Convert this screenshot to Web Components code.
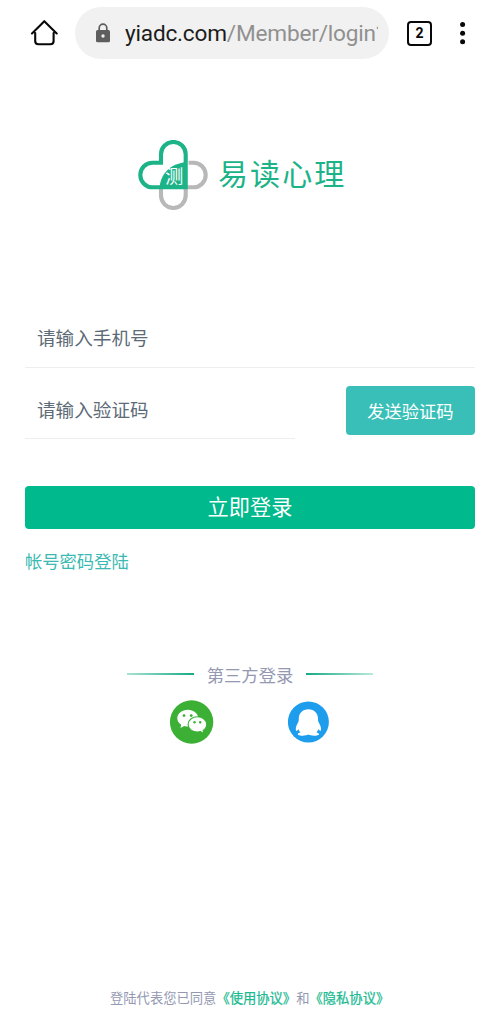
<!DOCTYPE html>
<html lang="zh-CN">
<head>
<meta charset="utf-8">
<title>易读心理</title>
<style>
body{margin:0;background:#fff;font-family:"Noto Sans CJK SC","Noto Sans",sans-serif}
</style>
</head>
<body>
<login-page></login-page>
<script>
const define=(name,html)=>customElements.define(name,class extends HTMLElement{
  constructor(){
    super();
    const t=document.createElement('template');
    t.innerHTML=html;
    this.attachShadow({mode:'open'}).append(t.content.cloneNode(true));
  }
});

define('browser-bar',`<style>
:host{display:flex;align-items:center;height:66px;box-sizing:border-box;padding-left:30px;font-family:Roboto,sans-serif}
svg{display:block;flex:none}
.url{display:flex;align-items:center;width:314px;height:52px;margin-left:17px;border-radius:26px;background:#f1f1f1;box-sizing:border-box;padding-left:20px}
.addr{margin-left:14px;width:253px;overflow:hidden;white-space:nowrap;font-size:22.6px;line-height:32px;color:#909090;letter-spacing:-.19px;padding-top:1px}
.addr b{font-weight:400;color:#1c1c1c}
.tabs{width:25px;height:25px;box-sizing:border-box;border:2.6px solid #080808;border-radius:4px;margin-left:18px;display:flex;align-items:center;justify-content:center;font-size:14px;font-weight:700;color:#080808}
.menu{margin-left:27px}
</style>
<svg width="28" height="28" viewBox="0 0 28 28" fill="none" stroke="#080808" stroke-width="2.1" stroke-linecap="round" stroke-linejoin="round"><path d="M2 14.4 14.3 2.2 26.7 14.4M5.2 14V22q0 3.3 3.3 3.3H20.3q3.3 0 3.3-3.3V14"/></svg>
<div class="url">
<svg width="16" height="20" viewBox="0 0 16 20"><rect x="1" y="7" width="14" height="12.3" rx="1.6" fill="#5e5e5e"/><path d="M4.2 8V5a3.8 3.8 0 0 1 7.6 0v3" fill="none" stroke="#5e5e5e" stroke-width="1.7"/><circle cx="8" cy="13" r="1.7" fill="#f1f1f1"/></svg>
<div class="addr"><b>yiadc.com</b>/Member/login?</div>
</div>
<div class="tabs">2</div>
<svg class="menu" width="8" height="24" viewBox="0 0 8 24" fill="#080808"><circle cx="3.6" cy="3.6" r="2.5"/><circle cx="3.6" cy="12.2" r="2.5"/><circle cx="3.6" cy="20.8" r="2.5"/></svg>`);

define('brand-logo',`<style>
:host{display:flex;align-items:center;margin:74px 0 0 138px;height:70px}
svg{display:block;flex:none}
span{margin-left:10px;margin-top:-7px;font-size:30px;line-height:40px;letter-spacing:2.1px;color:#1bb387;white-space:nowrap}
</style>
<svg width="70" height="70" viewBox="0 0 70 70">
<g fill="none" stroke-width="4.1">
<path stroke="#b8b8b8" d="M50.5 22.7H55.4A12.3 12.3 0 0 1 55.4 47.3H49M47.7 49V55.6A12.35 12.35 0 0 1 23 55.6V49"/>
<path stroke="#1bb387" d="M47.7 47.3V14.3A12.35 12.35 0 0 0 23 14.3V22.7H14.6A12.3 12.3 0 0 0 14.6 47.3Z"/>
</g>
<path fill="#1bb387" d="M21.5 48C22.5 34 32 23.5 48 22.2V48Z"/>
<text x="27.3" y="43.2" font-size="18" fill="#fff" font-family="Noto Sans CJK SC,sans-serif">测</text>
</svg>
<span>易读心理</span>`);

define('text-field',`<style>
:host{display:block;box-sizing:border-box;border-bottom:1px solid #eee;padding-left:12px;font-size:18.6px;line-height:28px;color:#5c6b77;white-space:nowrap}
</style><slot></slot>`);

define('action-button',`<style>
:host{display:flex;align-items:center;justify-content:center;box-sizing:border-box;border-radius:4px;color:#fff;white-space:nowrap}
</style><slot></slot>`);

define('login-form',`<style>
:host{display:block;padding:0 25px}
.phone{height:45px}
.row{display:flex;justify-content:space-between;margin-top:18px;height:54px}
.code{width:270px;height:53px;padding-top:9px}
.send{width:129px;height:49px;margin-top:0;background:#3abfb8;font-size:17.25px;line-height:26px;padding-top:1px}
.go{height:43px;margin-top:46px;background:#00b98c;font-size:21.2px;line-height:30px;padding-bottom:3px}
.alt{margin-top:19px;font-size:17.3px;line-height:26px;color:#3abab3}
</style>
<text-field class="phone">请输入手机号</text-field>
<div class="row"><text-field class="code">请输入验证码</text-field><action-button class="send">发送验证码</action-button></div>
<action-button class="go">立即登录</action-button>
<div class="alt">帐号密码登陆</div>`);

define('third-party',`<style>
:host{display:block}
.head{display:flex;justify-content:center;gap:13px;font-size:17.3px;line-height:26px;color:#9498b1}
i{width:67px;height:2px;margin-top:11px;background:linear-gradient(90deg,#a8e3d3,#16a985)}
i:last-child{background:linear-gradient(270deg,#b7eadc,#16a985)}
.icons{display:flex;align-items:center;margin:12px 0 0 169px;gap:74px}
svg{display:block}
</style>
<div class="head"><i></i><span>第三方登录</span><i></i></div>
<div class="icons">
<svg width="45" height="44" viewBox="0 0 45 44"><circle cx="22.6" cy="22" r="21.7" fill="#3bb034"/>
<path fill="#fff" d="M18.8 9.7C13 9.7 8.3 13.4 8.3 18.2c0 2.8 1.5 5 4 6.5L11.4 28l3.9-2c1.2.4 2.3.5 3.5.5 5.8 0 10.4-3.6 10.4-8.4S24.6 9.7 18.8 9.7Z"/>
<path fill="#fff" stroke="#3bb034" stroke-width="1.1" d="M28.4 16.8c-5.2 0-9.3 3.3-9.3 7.6s4.1 7.6 9.3 7.6c1.1 0 2.1-.1 3-.4l3.6 2-.9-3.1c2.2-1.5 3.6-3.6 3.6-6.1 0-4.3-4.1-7.6-9.3-7.6Z"/>
<g fill="#3bb034"><circle cx="15" cy="15.6" r="1.4"/><circle cx="22.2" cy="15.6" r="1.4"/><circle cx="25.5" cy="22.3" r="1.2"/><circle cx="31.2" cy="22.3" r="1.2"/></g></svg>
<svg width="42" height="42" viewBox="0 0 42 42"><circle cx="20.4" cy="21" r="20.5" fill="#1e9ded"/>
<path fill="#fff" d="M20.4 8.2c-5.8 0-9.6 4-9.6 9.2 0 1.6-.1 2.6-.5 3.7-1.3 2.3-2.6 4.4-2.5 7.1 0 1.5.6 2.1 1.4 1.4l1.3-1.3c.4 1.4 1.1 2.3 2 3.1-1.9.4-2.8 1-2.7 1.8.1 1.7 7.7 2.1 10.6.4 2.9 1.7 10.5 1.3 10.6-.4.1-.8-.8-1.4-2.7-1.8.9-.8 1.6-1.7 2-3.1l1.3 1.3c.8.7 1.4.1 1.4-1.4.1-2.7-1.2-4.8-2.5-7.1-.4-1.1-.5-2.1-.5-3.7 0-5.2-3.8-9.2-9.6-9.2Z"/></svg>
</div>`);

define('agreement-note',`<style>
:host{display:block;padding-left:110px;font-size:13.3px;line-height:20px;color:#9498b1;white-space:nowrap}
b{font-weight:400;color:#1bba91;-webkit-text-stroke:.25px #1bba91}
</style>登陆代表您已同意<b>《使用协议》</b>和<b>《隐私协议》</b>`);

define('login-page',`<style>
:host{display:flex;flex-direction:column;height:1019px;background:#fff;overflow:hidden}
login-form{margin-top:113px}
third-party{margin-top:88px}
agreement-note{margin-top:auto;margin-bottom:11px}
</style>
<browser-bar></browser-bar><brand-logo></brand-logo><login-form></login-form><third-party></third-party><agreement-note></agreement-note>`);
</script>
</body>
</html>
